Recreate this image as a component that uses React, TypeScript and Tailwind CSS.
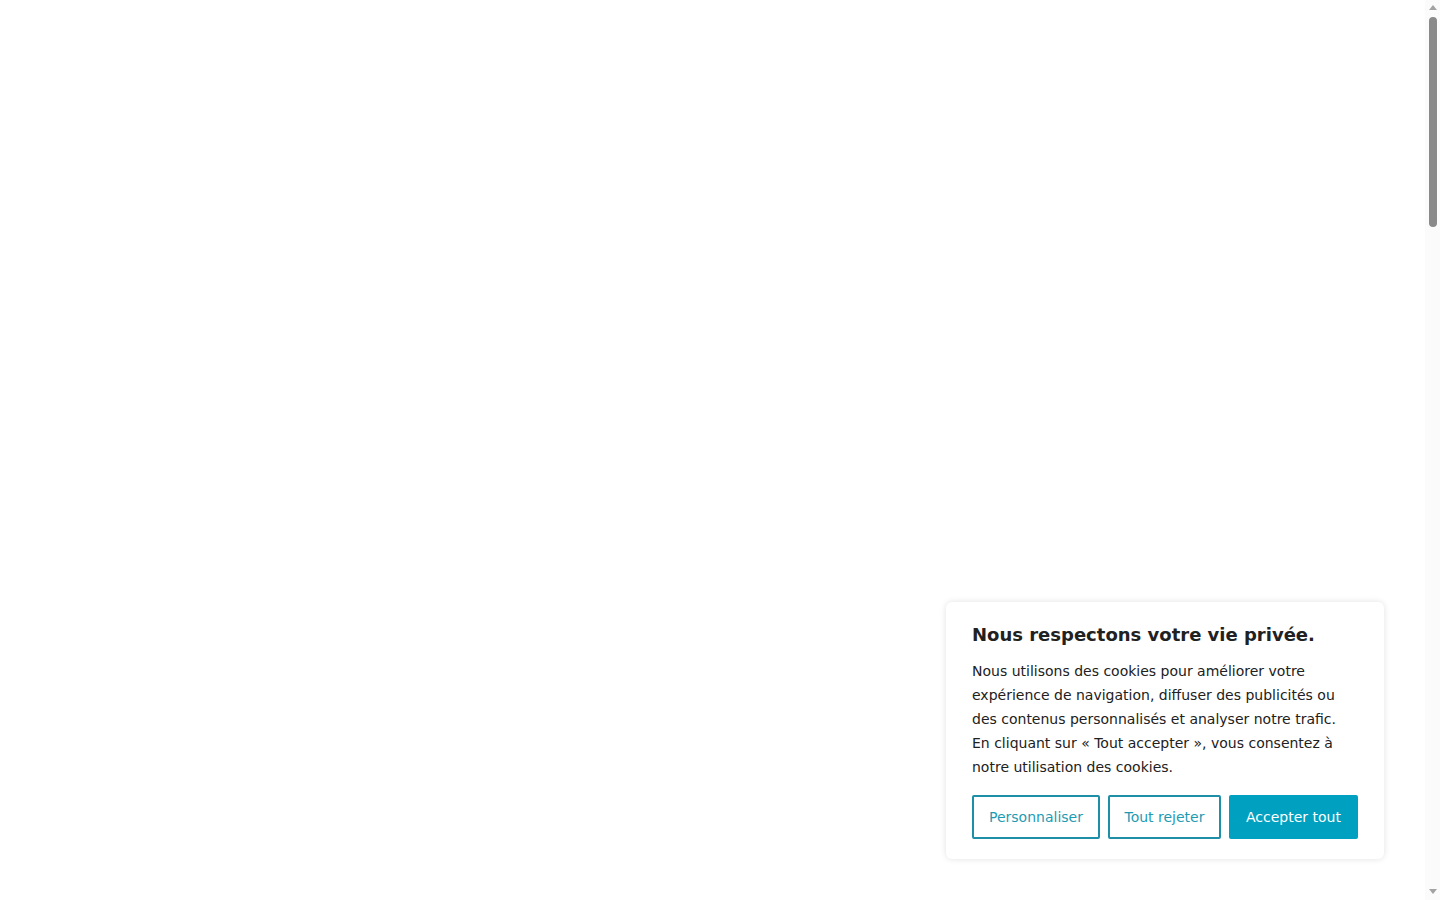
import React from "react";

export default function App() {
  return (
    <div className="flex h-screen w-full overflow-hidden bg-white" style={{ fontFamily: '"DejaVu Sans", sans-serif' }}>
      <main className="flex flex-1 items-end justify-end pb-[41px] pr-[41px]">
        <div className="w-[438px] rounded-[6px] bg-white px-[26px] pt-[21px] pb-[20px] shadow-[0_0_6px_rgba(0,0,0,0.12)]">
          <h2 className="text-[18px] font-bold leading-[24px] text-[#212121]">Nous respectons votre vie privée.</h2>
          <p className="mt-[12px] max-w-[380px] text-[14px] leading-[24px] text-[#212121]">
            Nous utilisons des cookies pour améliorer votre expérience de navigation, diffuser des publicités ou des
            contenus personnalisés et analyser notre trafic. En cliquant sur « Tout accepter », vous consentez à notre
            utilisation des cookies.
          </p>
          <div className="mt-[16px] flex gap-[8px]">
            <button className="h-[44px] w-[128px] rounded-[2px] border-2 border-[#1e8fa6] bg-white text-[14px] text-[#1e9bb3]">
              Personnaliser
            </button>
            <button className="h-[44px] w-[113px] rounded-[2px] border-2 border-[#1e8fa6] bg-white text-[14px] text-[#1e9bb3]">
              Tout rejeter
            </button>
            <button className="h-[44px] w-[129px] rounded-[2px] bg-[#00a0c0] text-[14px] text-white">Accepter tout</button>
          </div>
        </div>
      </main>
      <div className="flex w-[15px] flex-col items-center bg-[#fbfbfb] pt-[5px] pb-[6px]">
        <div className="h-0 w-0 border-x-[4px] border-b-[5px] border-x-transparent border-b-[#a3a3a3]" />
        <div className="mt-[7px] h-[210px] w-[8px] rounded-full bg-[#8a8a8a]" />
        <div className="flex-1" />
        <div className="h-0 w-0 border-x-[4px] border-t-[5px] border-x-transparent border-t-[#a3a3a3]" />
      </div>
    </div>
  );
}
